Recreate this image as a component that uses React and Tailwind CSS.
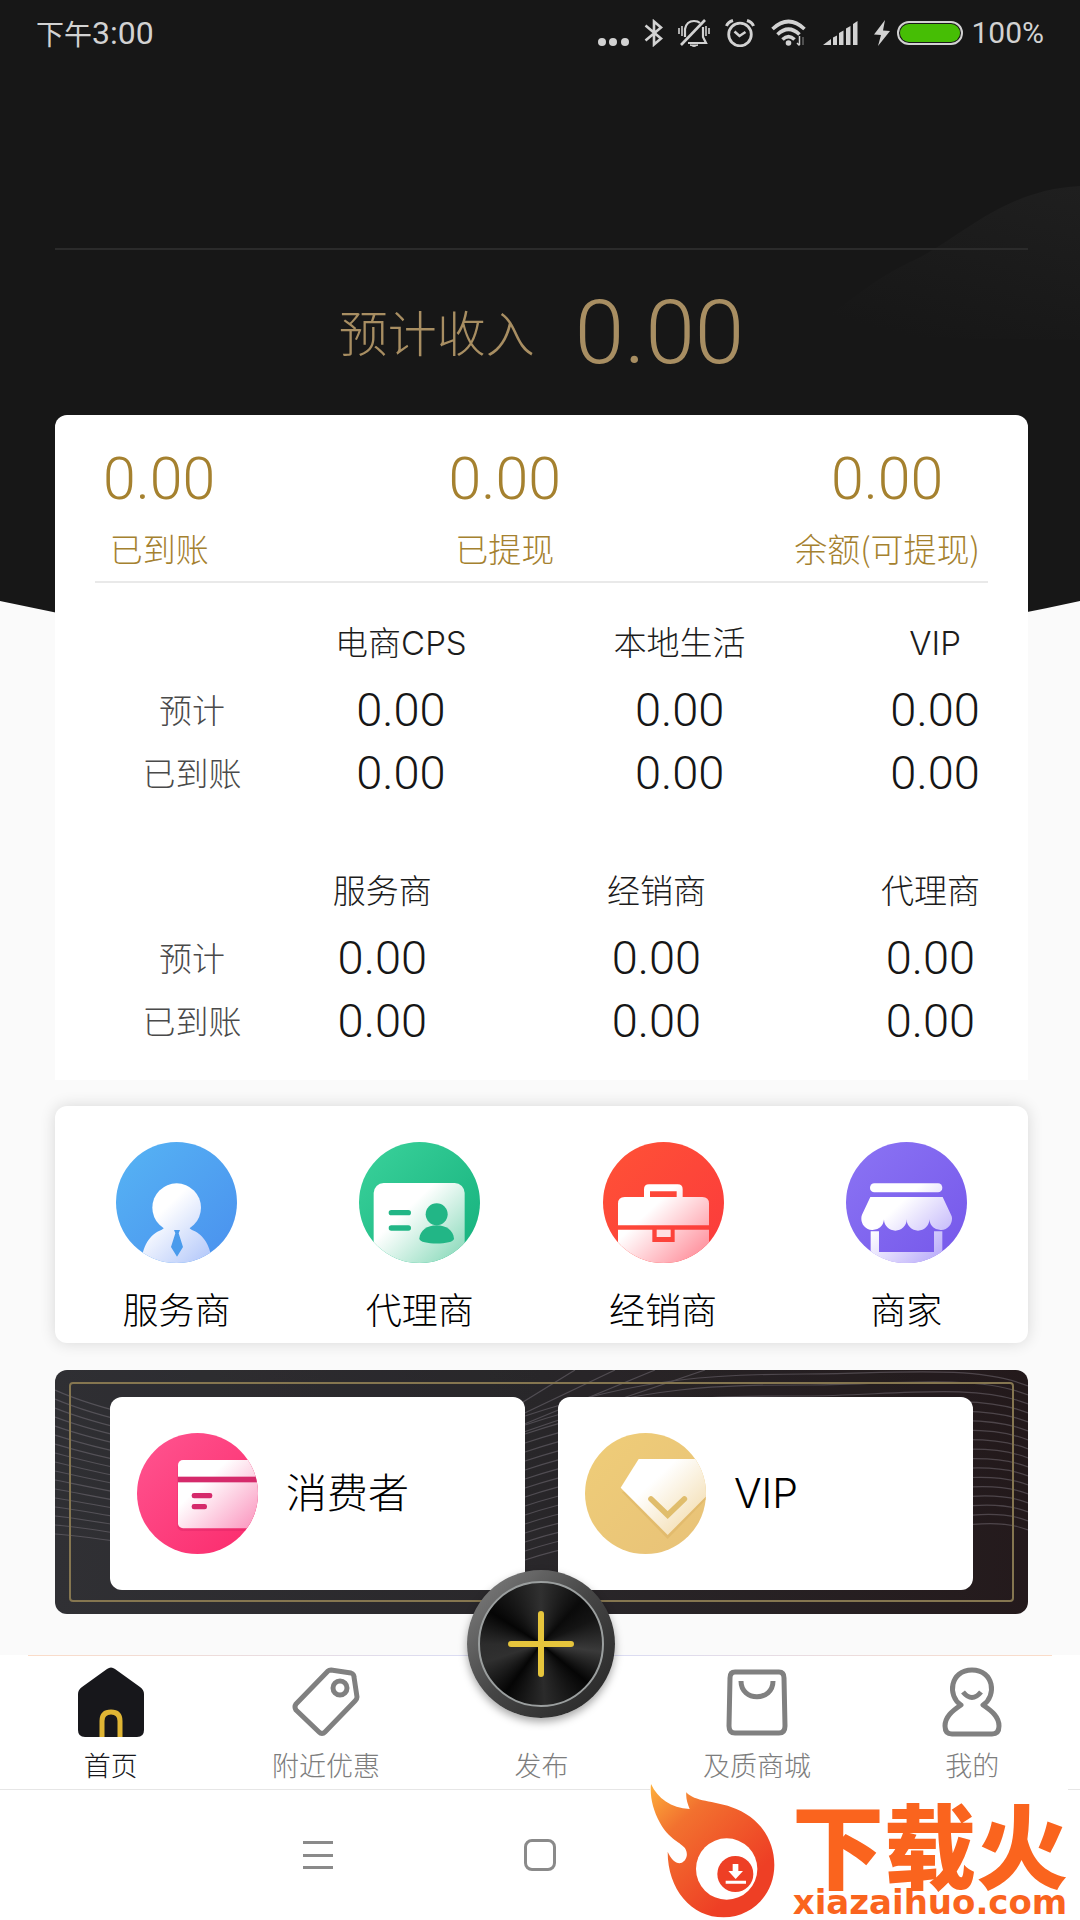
import { useState } from "react";

const summary = [
  { label: "已到账", value: "0.00" },
  { label: "已提现", value: "0.00" },
  { label: "余额(可提现)", value: "0.00" },
];

const channelIncome = {
  columns: ["电商CPS", "本地生活", "VIP"],
  widths: ["w-[20%]", "w-[25%]", "w-[35%]", "w-[20%]"],
};

const partnerIncome = {
  columns: ["服务商", "经销商", "代理商"],
  widths: ["w-[20%]", "w-[21%]", "w-[38%]", "w-[21%]"],
};

const rows = [
  { label: "预计", values: ["0.00", "0.00", "0.00"] },
  { label: "已到账", values: ["0.00", "0.00", "0.00"] },
];

function StatusIcons() {
  return (
    <div className="flex items-center text-[#d2d2d2]">
      <svg width="31" height="28" viewBox="0 0 31 28" fill="currentColor" className="mr-[15px]">
        <circle cx="4" cy="23" r="4" />
        <circle cx="15" cy="23" r="4" />
        <circle cx="27" cy="23" r="4" />
      </svg>
      <svg width="20" height="28" viewBox="0 0 20 28" fill="none" stroke="currentColor" strokeWidth="2.6" className="mr-[14px]">
        <path d="M1.5 6.5 17 19.5 10 25.5V2.5L17 8.500 1.500 21.500" strokeLinejoin="miter" />
      </svg>
      <svg width="32" height="28" viewBox="0 0 32 28" fill="none" stroke="currentColor" strokeWidth="2.2" className="mr-[15px]">
        <path d="M7 18V10C8 5 11 2 16 2C19 2 21 3 22 4M25 8V18L28 24H10" />
        <path d="M3 26 27 1" strokeWidth="2.600" />
        <path d="M12 26Q16 29 20 26z" fill="currentColor" strokeWidth="1" />
        <path d="M4 7V17M1 9V15M28 7V17M31 9V15" strokeWidth="1.600" />
      </svg>
      <svg width="30" height="28" viewBox="0 0 30 28" fill="none" stroke="currentColor" strokeWidth="2.8" className="mr-4">
        <circle cx="15" cy="15.500" r="11.300" />
        <path d="M9.500 12.500 14.500 17 20.500 13" strokeWidth="2.500" />
        <path d="M1.500 7Q3 3 8 1.500M28.500 7Q27 3 22 1.500" strokeWidth="3" />
      </svg>
      <svg width="36" height="28" viewBox="0 0 36 28" fill="none" stroke="currentColor" className="mr-4">
        <path d="M1.500 10Q17.500 -5 33.500 10" strokeWidth="3.600" />
        <path d="M6.500 15.500Q17.500 5 28.500 15.500" strokeWidth="3.600" />
        <path d="M11.500 20.500Q17.500 14.500 23.500 20.500" strokeWidth="3.600" />
        <circle cx="17.500" cy="24" r="2.800" fill="currentColor" stroke="none" />
        <path d="M28.500 17V26M26 24l2.500 2.500" strokeWidth="1.500" />
        <path d="M32 26V18" strokeWidth="1.500" opacity=".4" />
      </svg>
      <svg width="35" height="24" viewBox="0 0 35 24" fill="currentColor" className="mr-4">
        <path d="M0 24 8 18V24zM10 16.500 14 14.500V24H10zM16 12 20.500 9.500V24H16zM23 7.500 27.500 5V24H23zM30 3 34.500 0V24H30z" />
      </svg>
      <svg width="16" height="26" viewBox="0 0 16 26" fill="currentColor" className="mr-[7px]">
        <path d="M11 0 0 14.500 7 15 4 26 16 11 9 10.500z" />
      </svg>
      <div className="h-6 w-[66px] rounded-full border-2 border-[#d2d2d2] p-px">
        <div className="h-full rounded-full bg-[#46be05]" />
      </div>
      <span className="ml-2 font-['Roboto',sans-serif] text-[30px] leading-none font-normal">100%</span>
    </div>
  );
}

function IncomeTable({ name, columns, widths }) {
  return (
    <table aria-label={name} className="w-full table-fixed text-center">
      <thead>
        <tr className="h-[69px] font-['Inter','Noto_Sans_CJK_SC',sans-serif] text-[33px] leading-none text-[#1c1c1c]">
          <td className={widths[0]} />
          {columns.map((column, i) => (
            <th key={column} scope="col" className={`${widths[i + 1]} p-0 font-light whitespace-nowrap`}>
              {column}
            </th>
          ))}
        </tr>
      </thead>
      <tbody>
        {rows.map((row) => (
          <tr key={row.label} className="h-[63px]">
            <th scope="row" className="p-0 text-[33px] leading-none font-light text-[#4a4a4a]">
              {row.label}
            </th>
            {row.values.map((value, i) => (
              <td key={i} className="p-0 font-['Roboto',sans-serif] text-[47px] leading-none text-[#161616]">
                {value}
              </td>
            ))}
          </tr>
        ))}
      </tbody>
    </table>
  );
}

function Disc({ id, from, to, glyphTo, children }) {
  return (
    <svg viewBox="0 0 363 363" className="size-[121px] shrink-0" aria-hidden="true">
      <defs>
        <linearGradient id={`${id}-bg`} x1="0" y1="0" x2="1" y2="1">
          <stop offset="0" stopColor={from} />
          <stop offset="1" stopColor={to} />
        </linearGradient>
        <linearGradient id={`${id}-fg`} gradientUnits="userSpaceOnUse" x1="130" y1="150" x2="290" y2="320">
          <stop offset=".2" stopColor="#fff" />
          <stop offset="1" stopColor={glyphTo} />
        </linearGradient>
        <clipPath id={`${id}-clip`}>
          <circle cx="181.500" cy="181.500" r="181.500" />
        </clipPath>
      </defs>
      <g clipPath={`url(#${id}-clip)`}>
        <rect width="363" height="363" fill={`url(#${id}-bg)`} />
        {children}
      </g>
    </svg>
  );
}

function ServiceIcon() {
  return (
    <Disc id="service" from="#56b4f4" to="#4a90ee" glyphTo="#b9ccfa">
      <path d="M75 363C82 300 108 275 136 264Q150 258 143 247H221Q214 258 228 264C256 275 282 300 289 363z" fill="url(#service-fg)" />
      <circle cx="182" cy="197" r="73" fill="url(#service-fg)" />
      <path d="M174 264H192L188 274 201 315 183 344 165 315 178 274z" fill="#4a9bec" />
    </Disc>
  );
}

function AgentIcon() {
  return (
    <Disc id="agent" from="#3bd29b" to="#14b07c" glyphTo="#9adfc4">
      <rect x="44" y="123" width="273" height="280" rx="30" fill="url(#agent-fg)" />
      <g fill="#22b686">
        <rect x="89" y="204" width="67" height="16" rx="8" />
        <rect x="89" y="250" width="67" height="16" rx="8" />
        <circle cx="233" cy="217" r="33" />
        <path d="M181 290C183 265 205 250 233 250S283 265 285 290C285 309 181 309 181 290z" />
      </g>
    </Disc>
  );
}

function DealerIcon() {
  return (
    <Disc id="dealer" from="#ff5236" to="#fb3a3c" glyphTo="#ff9ba6">
      <path
        fill="url(#dealer-fg)"
        fillRule="evenodd"
        d="M45 250V185Q45 165 65 165H123V142Q123 127 138 127H224Q239 127 239 142V165H298Q318 165 318 185V250zM141 148V165H221V148z"
      />
      <path fill="url(#dealer-fg)" d="M45 263H148V300H215V263H318V363H45z" />
      <rect x="161" y="263" width="42" height="22" fill="#ffe0e2" />
    </Disc>
  );
}

function ShopIcon() {
  return (
    <Disc id="shop" from="#8b74f4" to="#7557ea" glyphTo="#bfb2fa">
      <rect x="72" y="124" width="217" height="27" rx="13" fill="url(#shop-fg)" />
      <path
        fill="url(#shop-fg)"
        d="M73 165H290L315 218Q318 224 318 228A34 34 0 0 1 250 232A34 34 0 0 1 182 232A34 34 0 0 1 114 232A34 34 0 0 1 46 228Q46 224 48 218z"
      />
      <path fill="url(#shop-fg)" d="M74 268H99V330H264V268H289V363H74z" />
      <path fill="url(#shop-fg)" d="M40 330H320V363H40z" />
    </Disc>
  );
}

function ConsumerIcon() {
  return (
    <Disc id="consumer" from="#ff5590" to="#fb2a6c" glyphTo="#fb9fc4">
      <rect x="121" y="90" width="280" height="204" rx="15" fill="#d81f62" opacity=".35" />
      <rect x="123" y="81" width="280" height="205" rx="15" fill="url(#consumer-fg)" />
      <g fill="#d52a6b">
        <rect x="123" y="131" width="240" height="17" />
        <rect x="164" y="180" width="62" height="16" rx="7" />
        <rect x="164" y="213" width="46" height="16" rx="7" />
      </g>
    </Disc>
  );
}

function VipIcon() {
  return (
    <Disc id="vip" from="#efcd78" to="#e8c278" glyphTo="#f3ddb0">
      <path d="M110 176 248 318 385 176z" fill="#d7ac5c" opacity=".4" />
      <path d="M161 78H335L389 164 248 306 107 164z" fill="url(#vip-fg)" />
      <path d="M198 198 248 246 298 198" fill="none" stroke="#e0bd6c" strokeWidth="17" strokeLinecap="round" />
    </Disc>
  );
}

const roles = [
  { label: "服务商", Icon: ServiceIcon },
  { label: "代理商", Icon: AgentIcon },
  { label: "经销商", Icon: DealerIcon },
  { label: "商家", Icon: ShopIcon },
];

const members = [
  { label: "消费者", Icon: ConsumerIcon },
  { label: "VIP", Icon: VipIcon },
];

function wave(k) {
  const a = 20 + 9 * k;
  const d = 46 + 9 * k;
  const e = 4 + 11 * k;
  const f = 16 + 9 * k;
  return `M0 ${a}C80 ${a + 36 - k * 2} 300 ${d + 50 - k} 470 ${d}C590 ${d - 40} 670 ${e} 750 ${e}S920 ${f - 22} 973 ${f}`;
}

function BannerWaves() {
  return (
    <svg viewBox="0 0 973 244" preserveAspectRatio="none" className="absolute inset-0 size-full" aria-hidden="true">
      <g fill="none" stroke="#8d8690" strokeWidth="1.200" opacity=".4">
        {Array.from({ length: 17 }, (_, k) => (
          <path key={k} d={wave(k)} />
        ))}
        <path d="M455 40 520 0M455 50 560 0M455 60 600 0M460 65 650 0" />
      </g>
    </svg>
  );
}

function HomeIcon() {
  return (
    <svg width="66" height="70" viewBox="0 0 66 70" aria-hidden="true">
      <path d="M29 2Q33 -1 37 2L62 20Q66 23 66 27V63Q66 70 59 70H7Q0 70 0 63V27Q0 23 4 20z" fill="#17171b" />
      <path d="M24 70V54Q24 45 33 45T42 54V70" fill="none" stroke="#dfb534" strokeWidth="5" />
    </svg>
  );
}

function TagIcon() {
  return (
    <svg width="68" height="70" viewBox="0 0 68 70" fill="none" stroke="#808080" strokeWidth="5" strokeLinejoin="round" aria-hidden="true">
      <path d="M36 4Q37 3 39 3L59 6Q62 7 62 10L65 30Q65 32 63 34L33 65Q30 68 27 65L4 43Q2 40 4 37z" />
      <circle cx="48" cy="21" r="7" />
    </svg>
  );
}

function BagIcon() {
  return (
    <svg width="62" height="70" viewBox="0 0 62 70" fill="none" stroke="#808080" strokeWidth="5" aria-hidden="true">
      <path d="M9 5H53Q58 5 58 11L59 59Q59 66 53 66H9Q3 66 3 59L4 11Q4 5 9 5z" />
      <path d="M15 14C15 35 47 35 47 14" />
    </svg>
  );
}

function UserIcon() {
  return (
    <svg width="60" height="70" viewBox="0 0 60 70" fill="none" stroke="#808080" strokeWidth="5" strokeLinejoin="round" aria-hidden="true">
      <path d="M19 38C5 29 8 3 30 3S55 29 41 38C50 44 57 50 57 59Q57 67 50 67H10Q3 67 3 59C3 50 10 44 19 38z" />
      <path d="M21 25Q30 36 39 25" />
    </svg>
  );
}

function PublishButton() {
  return (
    <span className="absolute -top-[86px] left-1/2 flex size-[148px] -translate-x-1/2 items-center justify-center rounded-full bg-linear-to-br from-[#858585] via-[#454545] to-[#242424] shadow-[0_4px_8px_rgba(0,0,0,0.35)]">
      <span className="flex size-[126px] items-center justify-center rounded-full border-2 border-[#9b9f9f] bg-[conic-gradient(#303030,#0a0a0a_12%,#141414_18%,#3a3a3a_27%,#050505_36%,#2b2b2b_49%,#050505_60%,#303030_70%,#2c2c2c_75%,#050505_84%,#303030)]">
        <svg width="68" height="68" viewBox="0 0 68 68" stroke="#e6c53c" strokeWidth="6" strokeLinecap="round" aria-hidden="true">
          <path d="M34 4V64M4 34H64" />
        </svg>
      </span>
    </span>
  );
}

const tabs = [
  { label: "首页", Icon: HomeIcon },
  { label: "附近优惠", Icon: TagIcon },
  { label: "发布", Icon: PublishButton },
  { label: "及质商城", Icon: BagIcon },
  { label: "我的", Icon: UserIcon },
];

function SiteLogo() {
  return (
    <a
      href="#xiazaihuo"
      className="absolute right-3 bottom-0 flex items-end bg-white text-[#fa641e]"
      aria-label="下载火 xiazaihuo.com"
    >
      <svg width="126" height="138" viewBox="67 419 378 414" aria-hidden="true">
        <defs>
          <linearGradient id="flame" x1="0" y1="0" x2=".7" y2=".8">
            <stop offset="0" stopColor="#fdb03c" />
            <stop offset=".35" stopColor="#f2712f" />
            <stop offset="1" stopColor="#ee3f25" />
          </linearGradient>
        </defs>
        <path
          fill="url(#flame)"
          d="M70 425C90 468 130 497 186 500C179 482 174 466 176 450C200 478 260 476 310 494C395 522 440 592 440 668C440 757 372 825 288 825C190 825 120 740 120 628C130 652 146 665 160 662C177 656 183 634 172 618C163 603 122 590 96 540C76 502 66 462 70 425z"
        />
        <circle cx="297" cy="680" r="92" fill="#fff" />
        <circle cx="323" cy="695" r="54" fill="#ee3f25" />
        <path fill="#fff" d="M315 665H332V686H346L324 710 302 686H315zM294 715H355V724H294z" />
      </svg>
      <span className="ml-4 flex flex-col items-center">
        <span className="text-[92px] leading-[84px] font-black">下载火</span>
        <span className="font-['DejaVu_Sans',sans-serif] text-[34px] leading-9 font-bold">xiazaihuo.com</span>
      </span>
    </a>
  );
}

export default function App() {
  const [activeTab, setActiveTab] = useState("首页");

  return (
    <div className="relative isolate flex min-h-screen flex-col bg-[#fafafa] font-['Noto_Sans_CJK_SC','Noto_Sans',sans-serif] font-light">
      <svg
        viewBox="0 0 1080 660"
        preserveAspectRatio="none"
        className="absolute inset-x-0 top-0 -z-10 h-[660px] w-full"
        aria-hidden="true"
      >
        <defs>
          <linearGradient id="ridge" x1="1" y1="0" x2=".5" y2="1">
            <stop offset="0" stopColor="#1f1f1f" />
            <stop offset="1" stopColor="#171717" />
          </linearGradient>
        </defs>
        <path d="M0 0H1080V601Q540 720 0 601z" fill="#171717" />
        <path d="M1080 186C1000 190 960 240 910 262C850 290 830 330 770 336L1080 340z" fill="url(#ridge)" />
      </svg>

      <header className="flex h-[66px] items-center justify-between px-9">
        <span className="flex items-center text-[28px] leading-none font-normal text-[#d2d2d2]">
          下午<span className="font-['Roboto',sans-serif] text-[32px]">3:00</span>
        </span>
        <StatusIcons />
      </header>

      <main className="flex flex-col pt-[182px] pr-[52px] pl-[55px]">
        <section className="flex h-[167px] items-center justify-center gap-10 border-t-2 border-[#2b2b2b] pb-1 text-[#a88e62]">
          <h1 className="text-[49px] leading-none">预计收入</h1>
          <strong className="pt-1 font-['Roboto',sans-serif] text-[89px] leading-none font-light">0.00</strong>
        </section>

        <section className="rounded-t-xl bg-white pb-7">
          <dl className="mx-10 flex h-[168px] justify-between border-b-2 border-[#e9e9e9] px-2 pt-7 text-[#a5812f]">
            {summary.map((item) => (
              <div key={item.label} className="flex flex-col-reverse items-center justify-end">
                <dt className="text-[33px] leading-[66px]">{item.label}</dt>
                <dd className="font-['Roboto',sans-serif] text-[59px] leading-[72px]">{item.value}</dd>
              </div>
            ))}
          </dl>
          <div className="flex flex-col gap-[53px] pt-[26px] pl-11">
            <IncomeTable name="渠道收入" {...channelIncome} />
            <IncomeTable name="伙伴收入" {...partnerIncome} />
          </div>
        </section>

        <section className="mt-[26px] grid h-[237px] grid-cols-4 rounded-xl bg-white shadow-[0_0_16px_rgba(0,0,0,0.14)]">
          {roles.map(({ label, Icon }) => (
            <button key={label} type="button" className="flex flex-col items-center gap-5 pt-9 text-[36px] leading-[50px] text-black">
              <Icon />
              {label}
            </button>
          ))}
        </section>

        <section className="relative mt-[27px] h-[244px] overflow-hidden rounded-xl bg-linear-to-r from-[#303034] via-[#29272a] to-[#241a1c]">
          <BannerWaves />
          <div className="absolute inset-x-[14px] top-3 bottom-3 rounded border-2 border-[#857650]" />
          <div className="relative grid h-full grid-cols-2 gap-[33px] px-[55px] pt-[27px] pb-6">
            {members.map(({ label, Icon }) => (
              <button
                key={label}
                type="button"
                className="flex items-center gap-7 rounded-xl bg-white pl-[27px] font-['Inter','Noto_Sans_CJK_SC',sans-serif] text-[41px] leading-none text-black"
              >
                <Icon />
                {label}
              </button>
            ))}
          </div>
        </section>
      </main>

      <nav className="mt-[41px] flex flex-col bg-white">
        <div className="mx-7 h-px bg-linear-to-r from-[#fbdcc8] via-[#d5dcfa] to-[#fbdcc8]" />
        <ul className="grid h-[134px] grid-cols-5 border-b border-[#e6e6e6] pl-[3px]">
          {tabs.map(({ label, Icon }) => (
            <li key={label} className="relative">
              <button
                type="button"
                onClick={() => setActiveTab(label)}
                className={`flex size-full flex-col items-center justify-end gap-2 pb-1 text-[27px] leading-10 ${
                  label === activeTab ? "text-[#17171b]" : "text-[#7d7d7d]"
                }`}
              >
                <Icon />
                {label}
              </button>
            </li>
          ))}
        </ul>
      </nav>

      <footer className="relative flex flex-1 items-center bg-white">
        <div className="grid w-full grid-cols-5">
          <button type="button" aria-label="菜单" className="col-start-2 flex h-8 flex-col justify-between py-[2px] pl-[87px]">
            <span className="h-[3px] w-[30px] bg-[#8a8a8a]" />
            <span className="h-[3px] w-[30px] bg-[#8a8a8a]" />
            <span className="h-[3px] w-[30px] bg-[#8a8a8a]" />
          </button>
          <button type="button" aria-label="主屏幕" className="size-8 justify-self-center rounded-lg border-3 border-[#8a8a8a]" />
        </div>
        <SiteLogo />
      </footer>
    </div>
  );
}
